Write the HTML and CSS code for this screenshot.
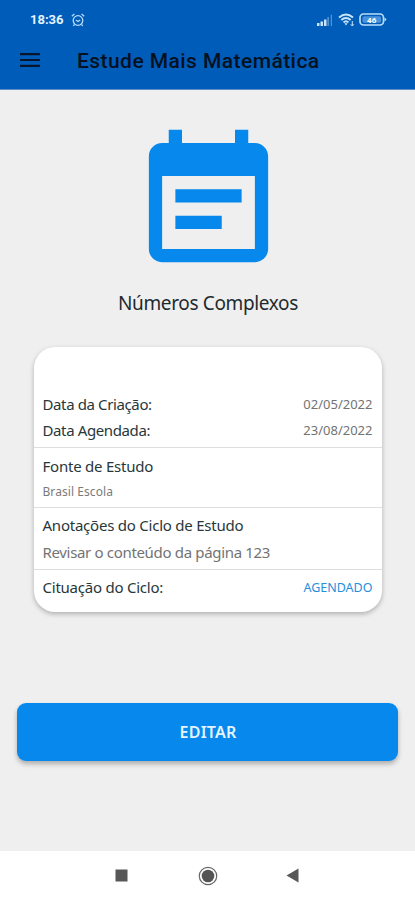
FILE: index.html
```html
<!DOCTYPE html>
<html lang="pt-BR">
<head>
<meta charset="utf-8">
<title>Estude Mais Matemática</title>
<link rel="stylesheet" href="styles.css">
</head>
<body>
<header class="header">
  <div class="status">
    <span class="time">18:36</span>
    <svg class="alarm" width="14" height="14" viewBox="0 0 14 14" fill="none" stroke="#b9dcfa" stroke-width="1.3"><circle cx="7" cy="7.5" r="4.8"/><path d="M.8 3.2 3.4 1M13.2 3.2 10.6 1M3.5 11.3 2.3 13M10.5 11.3 11.7 13M4.8 7 7 8.5 9.2 7"/></svg>
    <svg class="signal" width="17" height="12" viewBox="0 0 17 12" fill="#c9e4fb"><path d="M1 9h2.500v3H1zM4.500 7.500H7V12H4.500zM8 5.500h2.500V12H8z"/><path d="M11.300 3h1.700v9h-1.700zM14.700.8h1.300V12h-1.300z" opacity=".4"/></svg>
    <svg class="wifi" width="17" height="14" viewBox="0 0 17 14" fill="none" stroke="#c9e4fb" stroke-width="1.900"><path d="M1 4.500Q8 -1.500 15 4.500M3.300 7Q8 2.800 12.700 7M5.500 9.400Q8 7 10.500 9.400"/><path d="M6.400 10.300h3.200L8 12.500z" fill="#c9e4fb" stroke="none"/><path d="M14.300 8v5M12.700 11.300l1.600 1.700 1.500-1.700" stroke-width="1"/></svg>
    <svg class="battery" width="28" height="14" viewBox="0 0 28 14"><rect x="1" y="1" width="23.500" height="11" rx="3.500" fill="none" stroke="#b9dcfa" stroke-width="1.700"/><rect x="3.500" y="3.200" width="18.500" height="6.600" rx="1.500" fill="#4a93da"/><path d="M25.500 4.500Q29 6.500 25.500 8.500z" fill="#b9dcfa"/><text x="12.700" y="9.700" text-anchor="middle" class="charge">46</text></svg>
  </div>
  <div class="toolbar">
    <svg class="menu" width="20" height="14" viewBox="0 0 20 14" fill="#06162c"><path d="M0 0h20v2.200H0zM0 5.900h20v2.200H0zM0 11.800h20V14H0z"/></svg>
    <h1 class="title">Estude Mais Matemática</h1>
  </div>
</header>
<main class="content">
  <svg class="calendar" width="159" height="159" viewBox="0 0 24 24" fill="#0788ed"><path d="M19 3h-1V1h-2v2H8V1H6v2H5c-1.110 0-2 .9-2 2v14c0 1.100.89 2 2 2h14c1.100 0 2-.9 2-2V5c0-1.100-.9-2-2-2zm0 16H5V8h14v11zM17 10H7v2h10v-2zm-3 4H7v2h7v-2z"/></svg>
  <h2 class="subject">Números Complexos</h2>
  <section class="card">
    <div class="block dates">
      <div class="row"><span class="label tight">Data da Criação:</span><span class="date">02/05/2022</span></div>
      <div class="row"><span class="label tight">Data Agendada:</span><span class="date">23/08/2022</span></div>
    </div>
    <div class="block source">
      <div class="row"><span class="label">Fonte de Estudo</span></div>
      <div class="row small"><span>Brasil Escola</span></div>
    </div>
    <div class="block notes">
      <div class="row"><span class="label">Anotações do Ciclo de Estudo</span></div>
      <div class="row note"><span>Revisar o conteúdo da página 123</span></div>
    </div>
    <div class="block state">
      <div class="row"><span class="label">Cituação do Ciclo:</span><span class="tag">AGENDADO</span></div>
    </div>
  </section>
  <button class="edit">EDITAR</button>
</main>
<nav class="nav">
  <svg width="13" height="13" viewBox="0 0 13 13"><rect x=".5" y=".5" width="12" height="12" fill="#575757"/></svg>
  <svg width="20" height="20" viewBox="0 0 20 20"><circle cx="10" cy="10" r="8.700" fill="none" stroke="#666" stroke-width="1.200"/><circle cx="10" cy="10" r="6.300" fill="#555"/></svg>
  <svg class="back" width="13" height="15" viewBox="0 0 13 15"><path d="M.5 7.500 12.500.5v14z" fill="#575757"/></svg>
</nav>
</body>
</html>
```
FILE: styles.css
```css
* { box-sizing: border-box; }
body {
  margin: 0;
  width: 415px;
  height: 900px;
  display: flex;
  flex-direction: column;
  background: #efefef;
  font-family: "Noto Sans", "Open Sans", sans-serif;
  overflow: hidden;
}
.header { height: 90px; background: #005cb9; border-bottom: 1px solid #5d8dc6; flex: none; }
.status { height: 40px; display: flex; align-items: center; padding: 0 28px 0 30px; }
.time { font: 700 13px/16px Roboto, sans-serif; color: #e4f3ff; width: 34px; }
.alarm { margin-left: 7px; }
.signal { margin-left: auto; margin-right: 5px; }
.wifi { margin-right: 4px; }
.charge { font: 700 8px Roboto, sans-serif; fill: #fff; }
.toolbar { height: 42px; display: flex; align-items: center; padding-left: 20px; }
.menu { margin-top: -3px; }
.title { margin: 0 0 0 37px; font: 500 21px/30px Roboto, sans-serif; letter-spacing: .44px; color: #04111f; white-space: nowrap; }
.content { flex: 1; padding: 33px 17px 0; display: flex; flex-direction: column; align-items: center; }
.calendar { flex: none; margin: .4px 0 0 1px; }
.subject { margin: 5.600px 0 0 1px; height: 31px; font-size: 19px; line-height: 30px; font-weight: 400; letter-spacing: -.36px; color: #1e2a2e; white-space: nowrap; }
.card {
  width: 348px;
  height: 265px;
  margin-top: 28px;
  padding-top: 44px;
  background: #fff;
  border-radius: 21px;
  box-shadow: 0 2px 5px rgba(0, 0, 0, .27);
  flex: none;
}
.block { padding: 0 9px; border-bottom: 1px solid #dedede; }
.block:last-child { border-bottom: 0; }
.row { display: flex; justify-content: space-between; align-items: center; height: 26px; white-space: nowrap; }
.dates { height: 57px; }
.source { height: 60px; padding-top: 5px; }
.source .small { margin-top: 1px; }
.notes { height: 62px; padding-top: 4px; }
.state { padding-top: 4px; }
.label { font-size: 15px; letter-spacing: -.23px; color: #28373a; }
.tight { letter-spacing: -.38px; }
.date { font-size: 13px; color: #737373; margin-top: 1px; }
.small { height: 24px; font-size: 12px; letter-spacing: .07px; color: #7b7b7b; }
.note { margin-top: 1px; font-size: 15px; letter-spacing: -.33px; color: #737373; }
.tag { font-size: 12.500px; color: #2490dc; margin-top: 1px; }
.edit {
  width: 381px;
  height: 58px;
  margin-top: 91px;
  border: 0;
  border-radius: 9px;
  background: #0788ed;
  box-shadow: 0 3px 5px rgba(0, 0, 0, .28);
  color: #e4f5ff;
  font: 600 16px/58px "Noto Sans", sans-serif;
  letter-spacing: .2px;
  padding: 0 0 0 1px;
}
.nav { height: 49px; flex: none; background: #fff; display: flex; align-items: center; padding-left: 115px; gap: 70px; }
.back { margin-left: -2px; }
```
